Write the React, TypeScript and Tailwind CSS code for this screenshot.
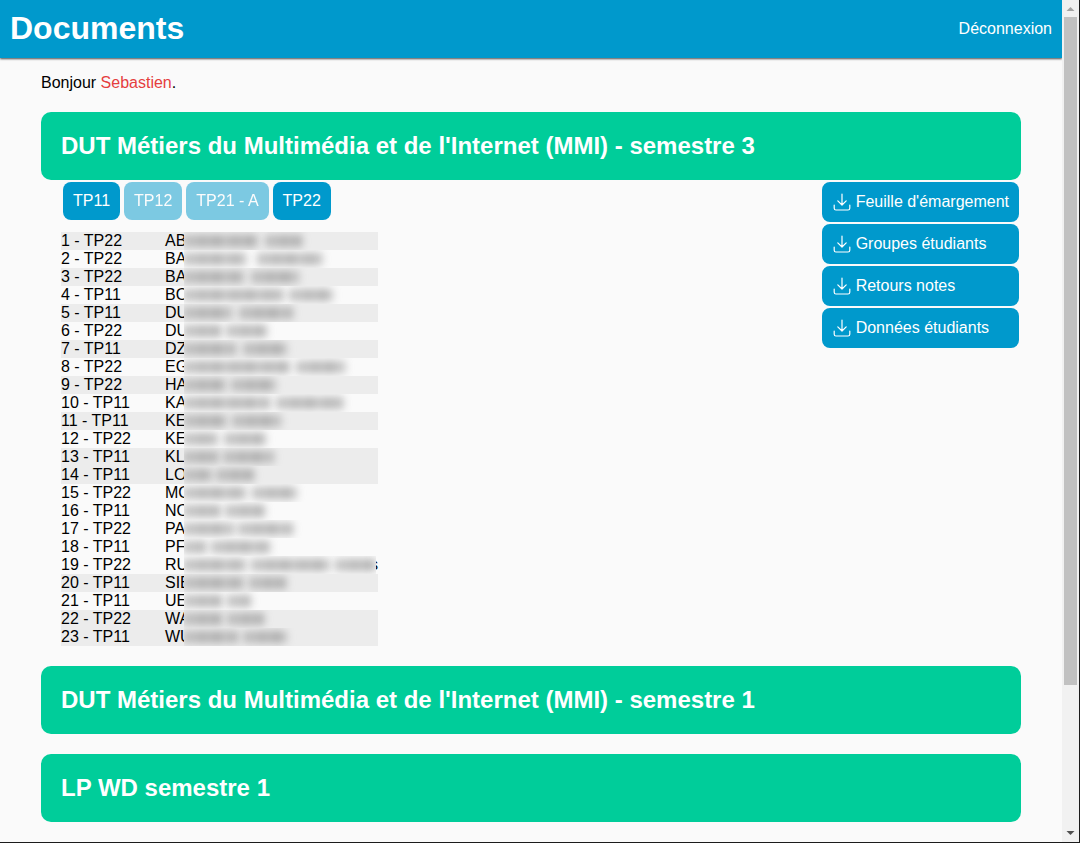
import React, { useState } from "react";

type Student = { group: string; initials: string; words: [number, number][]; striped?: boolean; tail?: string };

/* Each word is [gap before it, width] in pixels; names stay masked. */
const students: Student[] = [
  { group: "TP22", initials: "AB", words: [[0, 74], [8, 36]], striped: true },
  { group: "TP22", initials: "BA", words: [[0, 62], [12, 64]] },
  { group: "TP22", initials: "BA", words: [[0, 60], [8, 47]], striped: true },
  { group: "TP11", initials: "BO", words: [[0, 99], [7, 43]] },
  { group: "TP11", initials: "DU", words: [[0, 48], [8, 53]], striped: true },
  { group: "TP22", initials: "DU", words: [[0, 37], [6, 40]] },
  { group: "TP11", initials: "DZ", words: [[0, 52], [8, 43]], striped: true },
  { group: "TP22", initials: "EG", words: [[0, 106], [7, 48]] },
  { group: "TP22", initials: "HA", words: [[0, 42], [6, 44]], striped: true },
  { group: "TP11", initials: "KA", words: [[0, 86], [7, 66]] },
  { group: "TP11", initials: "KE", words: [[0, 43], [6, 48]], striped: true },
  { group: "TP22", initials: "KE", words: [[0, 33], [8, 41]] },
  { group: "TP11", initials: "KL", words: [[0, 34], [6, 50]], striped: true },
  { group: "TP11", initials: "LO", words: [[0, 28], [5, 37]], striped: true },
  { group: "TP22", initials: "MO", words: [[0, 62], [7, 44]] },
  { group: "TP11", initials: "NO", words: [[0, 36], [6, 39]] },
  { group: "TP22", initials: "PA", words: [[0, 50], [5, 54]] },
  { group: "TP11", initials: "PF", words: [[0, 22], [6, 58]] },
  { group: "TP22", initials: "RU", words: [[0, 62], [6, 78], [6, 40]], tail: "s" },
  { group: "TP11", initials: "SIE", words: [[0, 60], [6, 36]], striped: true },
  { group: "TP11", initials: "UE", words: [[0, 38], [6, 23]] },
  { group: "TP22", initials: "WA", words: [[0, 38], [6, 36]], striped: true },
  { group: "TP11", initials: "WU", words: [[0, 54], [6, 43]], striped: true },
];

const downloads = ["Feuille d'émargement", "Groupes étudiants", "Retours notes", "Données étudiants"];

function DownloadIcon() {
  return (
    <svg width="20" height="20" viewBox="0 0 20 20" fill="none" stroke="currentColor" strokeWidth="1.2" strokeLinecap="round" strokeLinejoin="round" aria-hidden="true">
      <path d="M10 2V13M5.8 8.8L10 13L14.2 8.8" />
      <path d="M2.2 13V16.2Q2.2 18 4 18H16Q17.8 18 17.8 16.2V13" />
    </svg>
  );
}

function SectionTitle({ children, open, onClick }: { children: React.ReactNode; open: boolean; onClick: () => void }) {
  return (
    <h2>
      <button type="button" aria-expanded={open} onClick={onClick} className="w-full cursor-pointer rounded-[10px] bg-[#00cd9a] px-5 py-5 text-left text-2xl leading-7 font-bold text-white">
        {children}
      </button>
    </h2>
  );
}

function StudentTable({ groups }: { groups: Record<string, boolean> }) {
  return (
    <table className="mt-3 table-fixed border-collapse leading-[18px]">
      <tbody>
        {students.map((s, i) =>
          groups[s.group] ? (
            <tr key={i} className={s.striped ? "bg-[#ececec]" : ""}>
              <td className="w-[104px] p-0 whitespace-nowrap">
                {i + 1} - {s.group}
              </td>
              <td className="w-[213px] p-0">
                <div className="relative flex h-[18px] justify-between">
                  <span>{s.initials}</span>
                  {s.tail && <span>{s.tail}</span>}
                  <span
                    aria-hidden="true"
                    className={`absolute inset-y-0 right-0.5 left-[19px] flex items-center overflow-hidden ${s.striped ? "bg-[#ececec]" : "bg-[#fafafa]"}`}
                  >
                    {s.words.map(([gap, width], w) => (
                      <span
                        key={w}
                        className="h-3 shrink-0 bg-[repeating-linear-gradient(90deg,#707070_0px,#a8a8a8_7px,#808080_19px,#a0a0a0_26px,#707070_33px)] opacity-60 blur-[4px]"
                        style={{ marginLeft: gap, width }}
                      />
                    ))}
                  </span>
                </div>
              </td>
            </tr>
          ) : null
        )}
      </tbody>
    </table>
  );
}

export default function App() {
  const [groups, setGroups] = useState<Record<string, boolean>>({ TP11: true, TP12: false, "TP21 - A": false, TP22: true });
  const [open, setOpen] = useState([true, false, false]);
  const toggle = (n: number) => setOpen(open.map((v, i) => (i === n ? !v : v)));

  return (
    <div className="flex min-h-screen border-r border-b border-[#1c1c1c] bg-[#fafafa] font-['Liberation_Sans',Arial,sans-serif] text-base text-black">
      <div className="min-w-0 flex-1">
        <header className="flex h-[58px] items-center justify-between bg-[#0099cc] px-2.5 text-white shadow-[0_1px_2px_rgba(0,0,0,0.7)]">
          <h1 className="pb-0.5 text-[32px] leading-10 font-bold">Documents</h1>
          <a href="#deconnexion">Déconnexion</a>
        </header>
        <main className="mx-[41px] pt-3 pb-5">
          <p className="mb-4 leading-[26px]">
            Bonjour <span className="text-[#e53e3e]">Sebastien</span>.
          </p>
          <div className="flex flex-col gap-5">
            <section>
              <SectionTitle open={open[0]} onClick={() => toggle(0)}>
                DUT Métiers du Multimédia et de l'Internet (MMI) - semestre 3
              </SectionTitle>
              {open[0] && (
                <div className="flex items-start justify-between pl-5">
                  <div>
                    <div className="flex gap-1 pt-0.5 pl-0.5">
                      {Object.keys(groups).map((g) => (
                        <button
                          key={g}
                          type="button"
                          aria-pressed={groups[g]}
                          onClick={() => setGroups({ ...groups, [g]: !groups[g] })}
                          className={`h-[38px] cursor-pointer rounded-lg px-2.5 whitespace-nowrap text-white ${groups[g] ? "bg-[#0099cc]" : "bg-[#0099cc] opacity-50"}`}
                        >
                          {g}
                        </button>
                      ))}
                    </div>
                    <StudentTable groups={groups} />
                  </div>
                  <div className="flex flex-col gap-0.5 pt-0.5 pr-0.5">
                    {downloads.map((d) => (
                      <a key={d} href="#telecharger" className="flex h-10 items-center gap-1 rounded-lg bg-[#0099cc] px-2.5 whitespace-nowrap text-white">
                        <DownloadIcon />
                        {d}
                      </a>
                    ))}
                  </div>
                </div>
              )}
            </section>
            <section>
              <SectionTitle open={open[1]} onClick={() => toggle(1)}>
                DUT Métiers du Multimédia et de l'Internet (MMI) - semestre 1
              </SectionTitle>
            </section>
            <section>
              <SectionTitle open={open[2]} onClick={() => toggle(2)}>
                LP WD semestre 1
              </SectionTitle>
            </section>
          </div>
        </main>
      </div>
      <div aria-hidden="true" className="flex w-[17px] flex-col items-center bg-[#f1f1f1]">
        <svg width="17" height="17" viewBox="0 0 17 17">
          <path d="M4.5 11L8.5 7L12.5 11Z" fill="#a3a3a3" />
        </svg>
        <div className="w-[13px] grow-[669] bg-[#c1c1c1]" />
        <div className="grow-[140]" />
        <svg width="17" height="17" viewBox="0 0 17 17">
          <path d="M4.5 6L8.5 10L12.5 6Z" fill="#505050" />
        </svg>
      </div>
    </div>
  );
}
